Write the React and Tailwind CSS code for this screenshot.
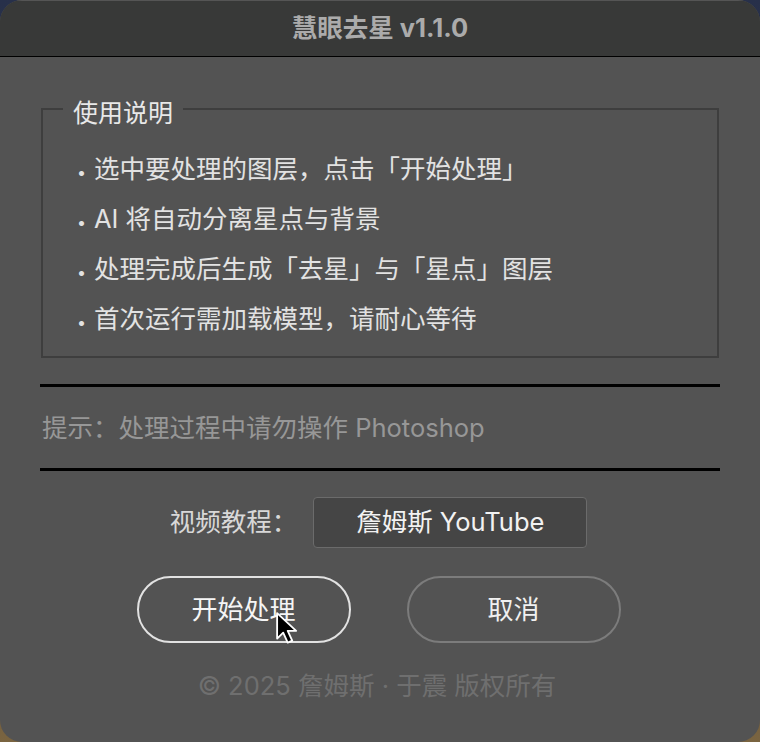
import React from "react";

const FONT = { fontFamily: '"Inter", "Noto Sans CJK SC", sans-serif' };

function Item({ children }) {
  return (
    <div className="flex items-center leading-[50px]">
      <span className="inline-block w-[13px] text-center text-[16px] translate-y-[3px]">•</span>
      <span className="ml-[6px]">{children}</span>
    </div>
  );
}

export default function App() {
  return (
    <div className="w-[760px] h-[742px] bg-gradient-to-b from-[#27304a] via-[#3a3a40] to-[#7a6440]" style={FONT}>
      <div className="relative w-[760px] h-[742px] rounded-[22px] overflow-hidden bg-[#535353] flex flex-col">
        {/* title bar */}
        <div className="h-[57px] shrink-0 bg-[#383938] border-t border-[#555] border-b border-b-black flex items-center justify-center">
          <span className="text-[25.5px] font-bold text-[#ababab]">慧眼去星 v1.1.0</span>
        </div>

        <div className="px-[40px] flex flex-col">
          <fieldset className="mt-[30px] mx-[1px] border-2 border-[#3e3e3e] pb-[12px] pl-[32px] pt-[13px] text-[#e2e2e2] text-[25.5px]">
            <legend className="ml-[-12px] px-[10px] pt-[8px] leading-[36px] text-[#e8e8e8] text-[25px]">使用说明</legend>
            <Item>选中要处理的图层，点击「开始处理」</Item>
            <Item>AI 将自动分离星点与背景</Item>
            <Item>处理完成后生成「去星」与「星点」图层</Item>
            <Item>首次运行需加载模型，请耐心等待</Item>
          </fieldset>

          <div className="mt-[26px] h-[3px] bg-black" />
          <div className="leading-[81px] text-[25.5px] text-[#979797] pl-[2px]">提示：处理过程中请勿操作 Photoshop</div>
          <div className="h-[3px] bg-black" />

          <div className="mt-[26px] pr-[3px] flex items-center justify-center gap-[16px]">
            <span className="text-[25.5px] text-[#d8d8d8]">视频教程：</span>
            <div className="w-[274px] h-[51px] rounded-[4px] border border-[#6b6b6b] bg-[#454545] flex items-center justify-center text-[25.5px] text-[#f2f2f2]">
              詹姆斯 YouTube
            </div>
          </div>

          <div className="mt-[28px] pr-[3px] flex justify-center gap-[56px]">
            <button className="relative w-[214px] h-[67px] rounded-full border-2 border-[#e2e2e2] text-[26px] text-[#f5f5f5] flex items-center justify-center">
              开始处理
              <svg className="absolute left-[136px] top-[33px]" width="24" height="34" viewBox="0 0 17 24">
                <path d="M1.5 1.5 L1.5 19.5 L5.8 15.3 L9 22.3 L12.2 20.9 L9 14 L15 14 Z" fill="#000" stroke="#fff" strokeWidth="1.3" strokeLinejoin="round" />
              </svg>
            </button>
            <button className="w-[214px] h-[67px] rounded-full border-2 border-[#7c7c7c] text-[26px] text-[#f0f0f0] flex items-center justify-center">
              取消
            </button>
          </div>

          <div className="mt-[25px] pr-[6px] leading-[36px] text-center text-[25.5px] text-[#6f6f6f]">© 2025 詹姆斯 · 于震 版权所有</div>
        </div>
      </div>
    </div>
  );
}
